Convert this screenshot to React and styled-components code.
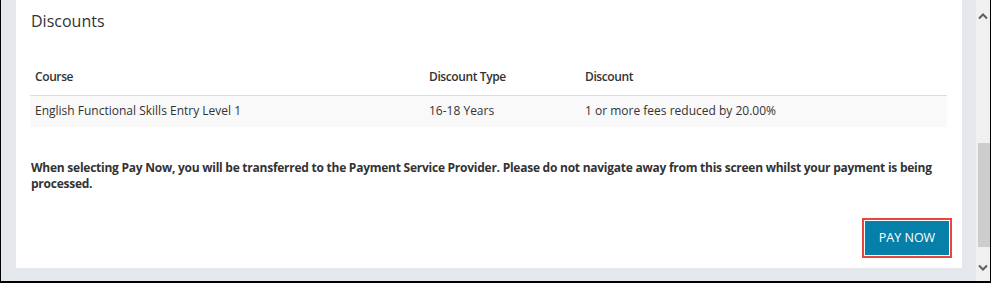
import React from 'react';
import styled, { createGlobalStyle } from 'styled-components';

const GlobalStyle = createGlobalStyle`
    html, body {
        margin: 0;
        padding: 0;
        background: #ffffff;
    }
    * {
        box-sizing: border-box;
    }
`;

const Frame = styled.div`
    display: flex;
    width: 991px;
    height: 283px;
    border-left: 1px solid #000;
    border-right: 1px solid #000;
    border-bottom: 2px solid #000;
    overflow: hidden;
    font-family: "Open Sans", "Liberation Sans", sans-serif;
    color: #333;
`;

const Viewport = styled.div`
    flex: 1;
    display: flex;
    background: #e4e8ec;
    padding: 0 14px 13px 15px;
`;

const Panel = styled.div`
    flex: 1;
    display: flex;
    flex-direction: column;
    background: #fff;
    padding: 0 15px 10px 14px;
`;

const Title = styled.h2`
    margin: 9px 0 0 1px;
    font-size: 16px;
    line-height: 24px;
    font-weight: 400;
    color: #333;
`;

const Table = styled.div`
    display: grid;
    grid-template-columns: 394px 156px 1fr;
    margin-top: 27px;
    font-size: 12px;
    line-height: 17px;
`;

const HeadCell = styled.div`
    padding: 8px 5px 10px;
    font-weight: 600;
    letter-spacing: -0.4px;
    border-bottom: 1px solid #ddd;
`;

const Cell = styled.div`
    padding: 6px 5px 8px;
    background: #f9f9f9;
`;

const Notice = styled.p`
    margin: 33px 0 0 1px;
    font-size: 12px;
    line-height: 16px;
    font-weight: 700;
    letter-spacing: -0.25px;
    color: #333;
`;

const Actions = styled.div`
    display: flex;
    justify-content: flex-end;
    margin-top: auto;
    margin-right: -5px;
`;

const Highlight = styled.div`
    border: 2px solid #e8463f;
    padding: 1px;
    background: #fff;
`;

const PayButton = styled.button`
    display: block;
    border: none;
    background: #0680a8;
    color: #fff;
    font-family: "Open Sans", "Liberation Sans", sans-serif;
    font-size: 12.5px;
    line-height: 17px;
    padding: 8px 0 9px;
    width: 84px;
    text-align: center;
    cursor: pointer;
`;

const Scrollbar = styled.div`
    width: 14px;
    display: flex;
    flex-direction: column;
    align-items: stretch;
    background: #f0f0f0;
`;

const Arrow = styled.div`
    height: 34px;
    display: flex;
    align-items: ${(p) => (p.$down ? 'flex-end' : 'flex-start')};
    justify-content: center;
    padding: ${(p) => (p.$down ? '0 0 10px' : '13px 0 0')};
`;

const Track = styled.div`
    flex: 1;
    display: flex;
    flex-direction: column;
    justify-content: flex-end;
    padding: 0 0 0 2px;
`;

const Thumb = styled.div`
    height: 104px;
    background: #cdcdcd;
`;

const Chevron = ({ down }) => (
    <svg width="10" height="7" viewBox="0 0 10 7">
        <path
            d={down ? 'M1 1.5 L5 5.5 L9 1.5' : 'M1 5.5 L5 1.5 L9 5.5'}
            fill="none"
            stroke="#606060"
            strokeWidth="2"
        />
    </svg>
);

const discounts = [
    {
        course: 'English Functional Skills Entry Level 1',
        type: '16-18 Years',
        discount: '1 or more fees reduced by 20.00%',
    },
];

export default function App() {
    return (
        <>
            <GlobalStyle />
            <Frame>
                <Viewport>
                    <Panel>
                        <Title>Discounts</Title>
                        <Table>
                            <HeadCell>Course</HeadCell>
                            <HeadCell>Discount Type</HeadCell>
                            <HeadCell>Discount</HeadCell>
                            {discounts.map((d) => (
                                <React.Fragment key={d.course}>
                                    <Cell>{d.course}</Cell>
                                    <Cell>{d.type}</Cell>
                                    <Cell>{d.discount}</Cell>
                                </React.Fragment>
                            ))}
                        </Table>
                        <Notice>
                            When selecting Pay Now, you will be transferred to the Payment Service
                            Provider. Please do not navigate away from this screen whilst your payment
                            is being processed.
                        </Notice>
                        <Actions>
                            <Highlight>
                                <PayButton>PAY NOW</PayButton>
                            </Highlight>
                        </Actions>
                    </Panel>
                </Viewport>
                <Scrollbar>
                    <Arrow>
                        <Chevron />
                    </Arrow>
                    <Track>
                        <Thumb />
                    </Track>
                    <Arrow $down>
                        <Chevron down />
                    </Arrow>
                </Scrollbar>
            </Frame>
        </>
    );
}
